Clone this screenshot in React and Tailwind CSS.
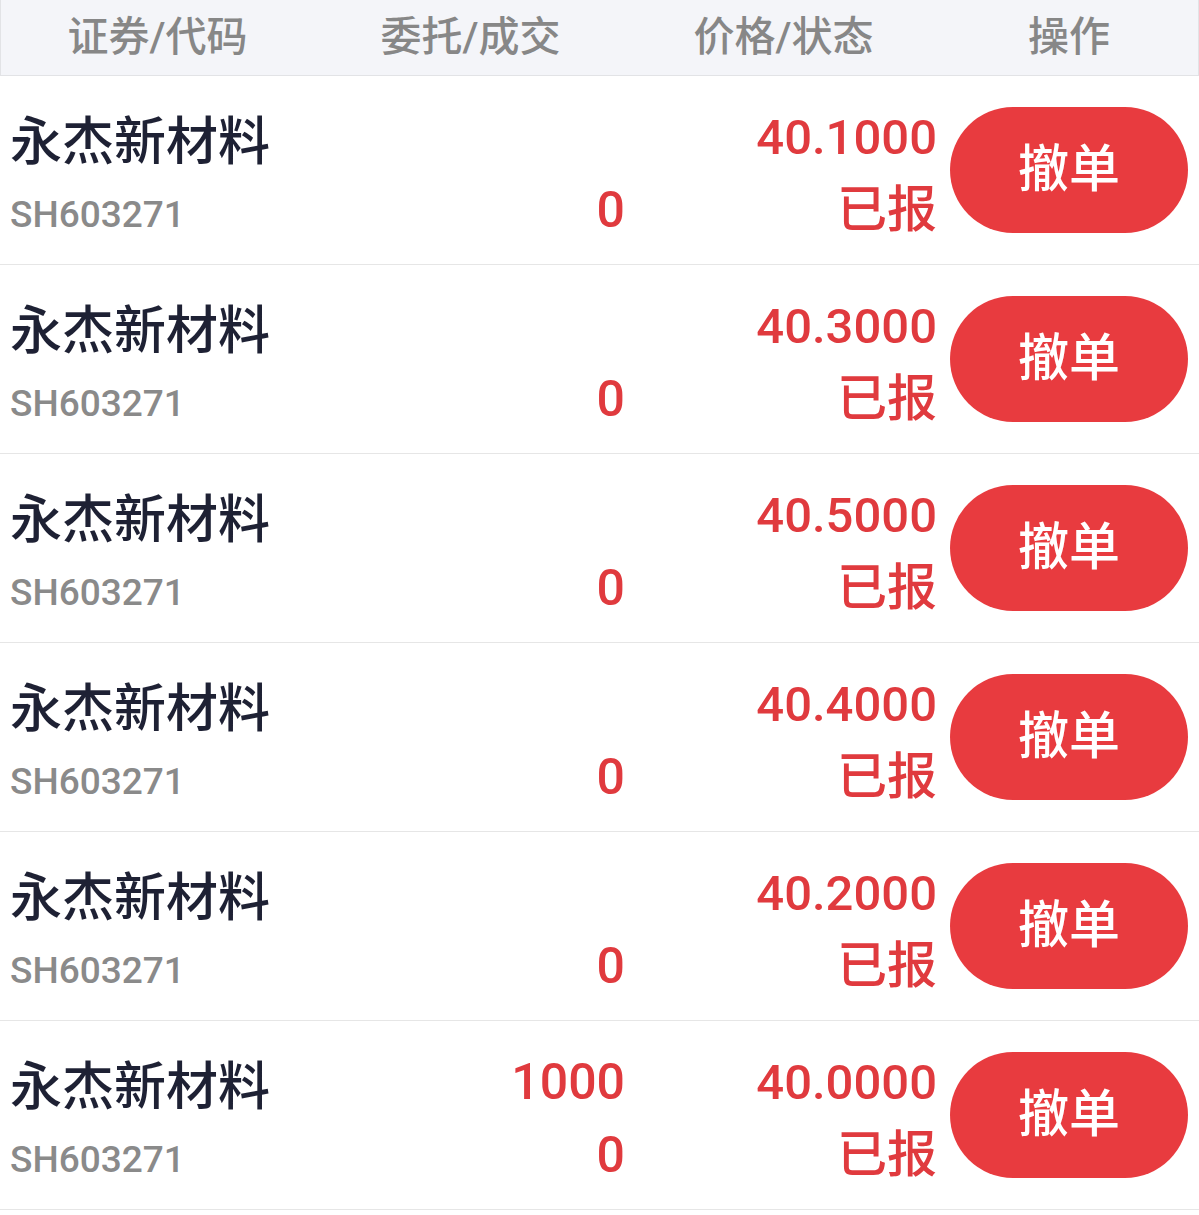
import React from 'react';

const orders = [
  { name: '永杰新材料', code: 'SH603271', qty: '', filled: '0', price: '40.1000', status: '已报' },
  { name: '永杰新材料', code: 'SH603271', qty: '', filled: '0', price: '40.3000', status: '已报' },
  { name: '永杰新材料', code: 'SH603271', qty: '', filled: '0', price: '40.5000', status: '已报' },
  { name: '永杰新材料', code: 'SH603271', qty: '', filled: '0', price: '40.4000', status: '已报' },
  { name: '永杰新材料', code: 'SH603271', qty: '', filled: '0', price: '40.2000', status: '已报' },
  { name: '永杰新材料', code: 'SH603271', qty: '1000', filled: '0', price: '40.0000', status: '已报' },
];

const font = "font-['Roboto','Noto_Sans_CJK_SC',sans-serif]";

const App = () => {
  return (
    <div className={`w-[1199px] bg-white ${font}`}>
      {/* HEADER */}
      <div className="flex h-[76px] items-center bg-[#f4f5f9] border border-t-0 border-[#e2e3e6] text-[41px] font-medium text-[#878787]">
        <div className="w-[313px] text-center">证券/代码</div>
        <div className="w-[313px] text-center">委托/成交</div>
        <div className="w-[313px] text-center">价格/状态</div>
        <div className="flex-1 text-center">操作</div>
      </div>

      {/* LIST */}
      {orders.map((o, i) => (
        <div key={i} className="flex h-[189px] items-start border-b border-[#e6e6e6]">
          <div className="w-[313px] pl-[10px] pt-[29px]">
            <div className="h-[75px] leading-[75px] text-[52px] font-medium text-[#1e2134]">{o.name}</div>
            <div className="h-[69px] leading-[69px] text-[37px] font-medium text-[#8a8a8a]">{o.code}</div>
          </div>
          <div className="w-[313px] pr-[1px] pt-[25px] text-right text-[50px] font-medium text-[#e03a3e]">
            <div className="h-[73px] leading-[73px]">{o.qty}</div>
            <div className="h-[73px] leading-[73px]">{o.filled}</div>
          </div>
          <div className="w-[313px] pr-[2px] pt-[25px] text-right font-medium text-[#e03a3e]">
            <div className="h-[73px] leading-[73px] text-[49px]">{o.price}</div>
            <div className="h-[73px] leading-[73px] text-[50px]">{o.status}</div>
          </div>
          <div className="flex-1 self-center pl-[11px] pr-[10px]">
            <button className="flex h-[126px] w-[238px] items-center justify-center rounded-full bg-[#e83b3f] text-[51px] font-medium text-white">
              撤单
            </button>
          </div>
        </div>
      ))}
    </div>
  );
};

export default App;
